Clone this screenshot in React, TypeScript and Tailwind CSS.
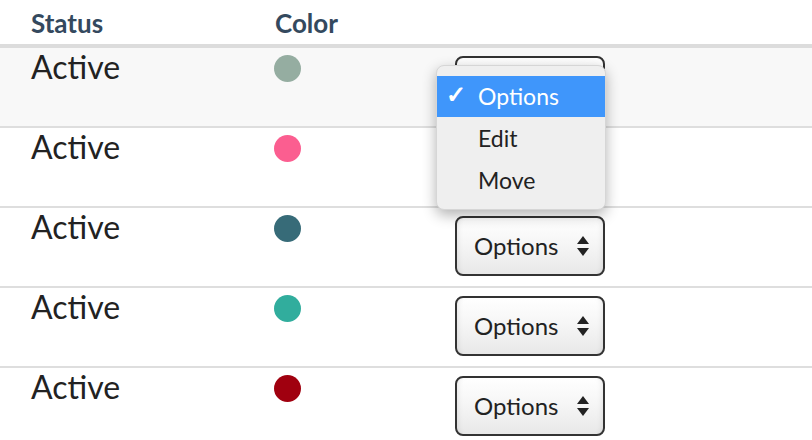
import React from 'react';

type Row = {
  status: string
  color: string
};

const rows: Row[] = [
  { status: 'Active', color: '#95ada1' },
  { status: 'Active', color: '#fb5e90' },
  { status: 'Active', color: '#376b78' },
  { status: 'Active', color: '#31ad9d' },
  { status: 'Active', color: '#a0000f' },
];

const SelectArrows = () => (
  <svg width="12" height="20" viewBox="0 0 12 20" className="block">
    <path d="M6 0 L12 8 L0 8 Z" fill="#222" />
    <path d="M0 12 L12 12 L6 20 Z" fill="#222" />
  </svg>
);

const OptionsSelect = () => (
  <div className="flex items-center justify-between w-[150px] h-[60px] pl-[17px] pr-[14px] rounded-[8px] border-2 border-[#333] bg-gradient-to-b from-white via-[#f5f5f5] to-[#e8e8e8] shadow-[inset_6px_0_6px_-6px_rgba(0,0,0,0.12),inset_-6px_0_6px_-6px_rgba(0,0,0,0.12)]">
    <span className="text-[24px] leading-none text-[#222]">Options</span>
    <SelectArrows />
  </div>
);

// open popup of the first row's select
const Menu = () => (
  <div className="absolute left-[436px] top-[65px] w-[170px] pt-[10px] pb-[8px] rounded-[8px] bg-[#efefef] border border-[#d6d6d6] shadow-[0_5px_14px_rgba(0,0,0,0.3)] z-10">
    <div className="flex items-center h-[41px] bg-[#3f96fb] text-white">
      <span className="w-[41px] pl-[9px] -mt-[6px] text-[24px] font-bold leading-[30px]">✓</span>
      <span className="text-[23px] leading-[41px]">Options</span>
    </div>
    <div className="h-[42px] pl-[41px] text-[23px] leading-[42px] text-[#222]">Edit</div>
    <div className="h-[42px] pl-[41px] text-[23px] leading-[42px] text-[#222]">Move</div>
  </div>
);

export default function App() {
  return (
    <div className="relative w-[812px] h-[440px] overflow-hidden bg-white font-['Lato','Liberation_Sans',sans-serif]">
      <div className="flex h-[48px] border-b-4 border-[#dcdcdc] text-[26px] font-bold text-[#34495e] pt-[4px]">
        <div className="w-[275px] pl-[31px]">Status</div>
        <div>Color</div>
      </div>

      {rows.map((row, i) => (
        <div key={i} className={`flex h-[80px] border-b-2 border-[#dedede] ${i === 0 ? 'bg-[#f8f8f8]' : 'bg-white'}`}>
          <div className="w-[243px] ml-[31px] text-[32px] leading-[38px] text-[#222]">{row.status}</div>
          <div className="w-[181px] pt-[7px]">
            <div className="w-[27px] h-[27px] rounded-full" style={{ backgroundColor: row.color }} />
          </div>
          {i > 1 && (
            <div className="pt-[8px]">
              <OptionsSelect />
            </div>
          )}
          {i === 0 && (
            <div className="pt-[8px]">
              <div className="w-[150px] h-[60px] rounded-[8px] border-2 border-[#333] bg-gradient-to-b from-white to-[#e8e8e8]" />
            </div>
          )}
        </div>
      ))}

      <Menu />
    </div>
  );
}
